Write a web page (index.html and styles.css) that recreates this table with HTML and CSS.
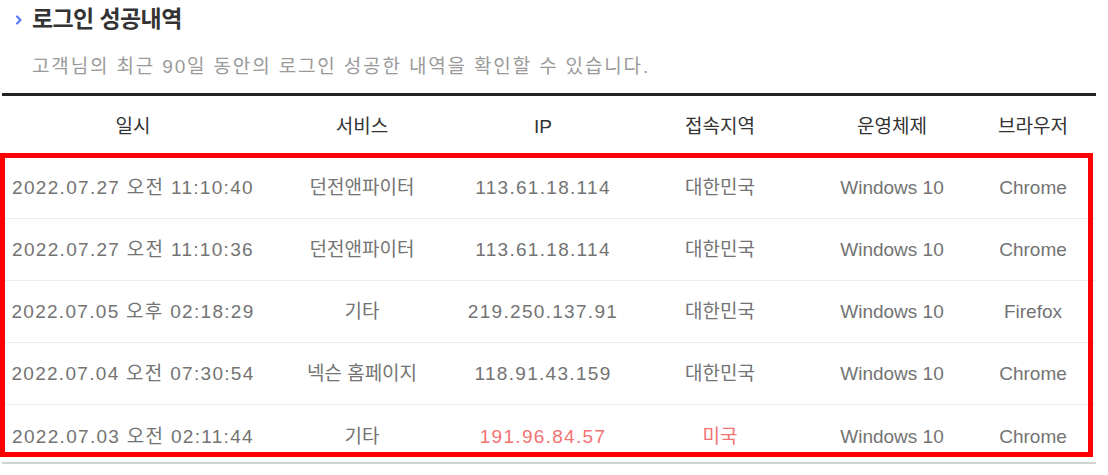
FILE: index.html
```html
<!DOCTYPE html>
<html lang="ko">
<head>
<meta charset="utf-8">
<title>로그인 성공내역</title>
<link rel="stylesheet" href="styles.css">
</head>
<body>
<div class="page">
  <div class="head">
    <h2 class="title"><svg class="chev" width="8" height="12" viewBox="0 0 8 12"><polyline points="2,2.5 5.5,6 2,9.5" fill="none" stroke="#5a78f0" stroke-width="2.2" stroke-linecap="round" stroke-linejoin="round"/></svg>로그인 성공내역</h2>
    <p class="desc">고객님의 최근 90일 동안의 로그인 성공한 내역을 확인할 수 있습니다.</p>
  </div>
  <div class="table">
    <div class="row thead">
      <div>일시</div><div>서비스</div><div>IP</div><div>접속지역</div><div>운영체제</div><div>브라우저</div>
    </div>
    <div class="row">
      <div class="num">2022.07.27 오전 11:10:40</div><div>던전앤파이터</div><div class="num">113.61.18.114</div><div>대한민국</div><div>Windows 10</div><div>Chrome</div>
    </div>
    <div class="row">
      <div class="num">2022.07.27 오전 11:10:36</div><div>던전앤파이터</div><div class="num">113.61.18.114</div><div>대한민국</div><div>Windows 10</div><div>Chrome</div>
    </div>
    <div class="row">
      <div class="num">2022.07.05 오후 02:18:29</div><div>기타</div><div class="num">219.250.137.91</div><div>대한민국</div><div>Windows 10</div><div>Firefox</div>
    </div>
    <div class="row">
      <div class="num">2022.07.04 오전 07:30:54</div><div>넥슨 홈페이지</div><div class="num">118.91.43.159</div><div>대한민국</div><div>Windows 10</div><div>Chrome</div>
    </div>
    <div class="row last">
      <div class="num">2022.07.03 오전 02:11:44</div><div>기타</div><div class="num warn">191.96.84.57</div><div class="warn">미국</div><div>Windows 10</div><div>Chrome</div>
    </div>
  </div>
  <div class="highlight"></div>
</div>
</body>
</html>
```

FILE: styles.css
```css
html, body {
  margin: 0;
  padding: 0;
  background: #fff;
}
body {
  font-family: "Liberation Sans", "Noto Sans CJK KR", sans-serif;
  color: #333;
}
.page {
  position: relative;
  width: 1108px;
  height: 475px;
  overflow: hidden;
}
.head {
  height: 93px;
  padding-left: 15px;
  box-sizing: border-box;
}
.title {
  margin: 0;
  padding-top: 2px;
  height: 34px;
  line-height: 32px;
  font-size: 23px;
  font-weight: 700;
  letter-spacing: -0.6px;
  color: #333;
  display: flex;
  align-items: center;
  gap: 9px;
}
.chev {
  display: block;
  margin-top: 2px;
}
.desc {
  margin: 0;
  padding-top: 18px;
  padding-left: 17px;
  font-size: 19px;
  line-height: 26px;
  color: #9a9a9a;
  letter-spacing: 1.85px;
}
.table {
  margin-left: 2px;
  width: 1094px;
  border-top: 3px solid #222;
  border-bottom: 2px solid #d2d2d2;
}
.row {
  display: grid;
  grid-template-columns: 262px 196px 166px 188px 156px 126px;
  height: 62px;
  line-height: 62px;
  border-bottom: 1px solid #ededed;
  box-sizing: border-box;
  font-size: 19px;
  color: #737373;
  text-align: center;
  white-space: nowrap;
}
.row.thead {
  height: 61px;
  line-height: 61px;
  border-bottom: 0;
  color: #333;
}
.row.last {
  height: 57px;
  line-height: 64px;
  border-bottom: 0;
}
.num {
  letter-spacing: 1.3px;
}
.warn {
  color: #f27272;
}
.highlight {
  position: absolute;
  left: 0;
  top: 153px;
  width: 1093px;
  height: 304px;
  border: 5px solid #ff0000;
  box-sizing: border-box;
  pointer-events: none;
}
```
